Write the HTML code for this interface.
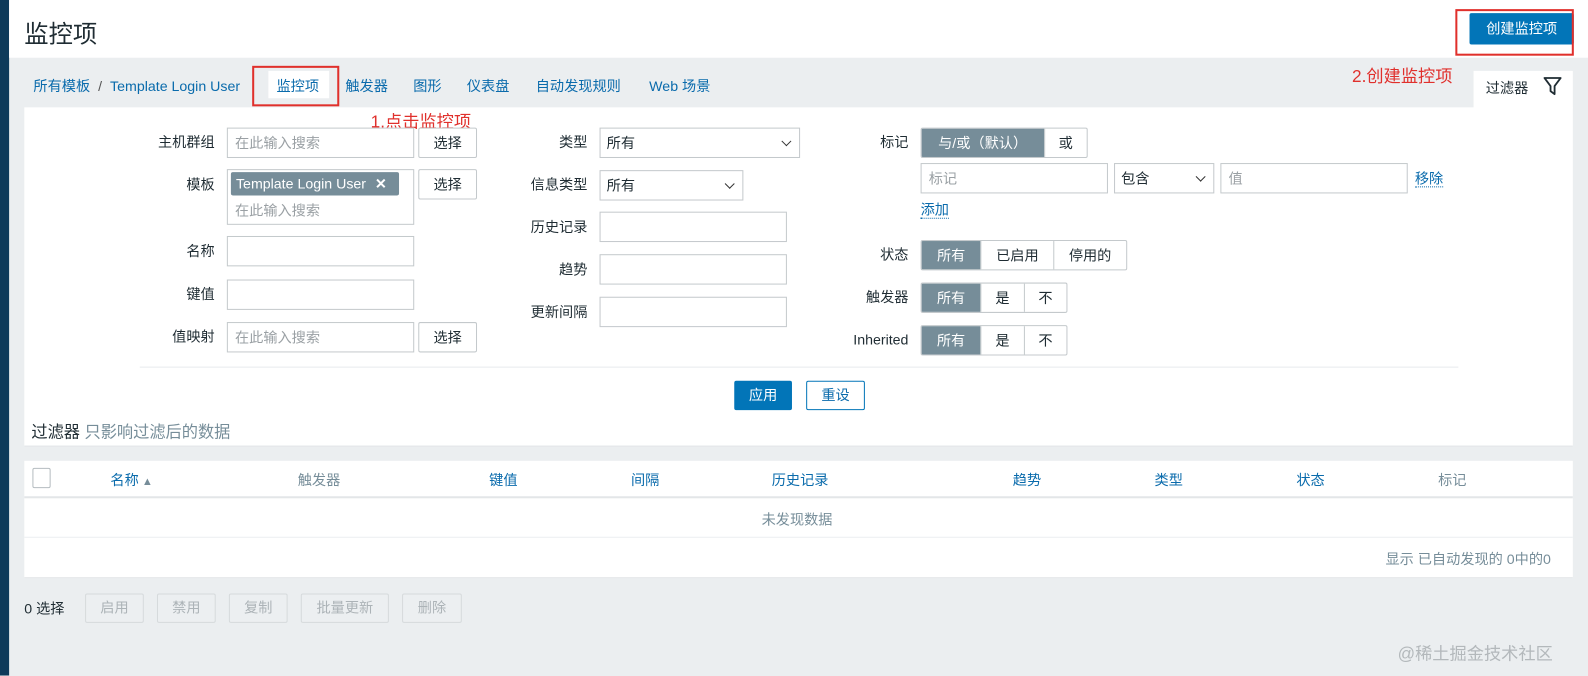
<!DOCTYPE html>
<html><head><meta charset="utf-8"><style>
*{box-sizing:border-box;margin:0;padding:0}
body{width:1588px;height:667px;background:#ebeef0;font-family:"Liberation Sans","Noto Sans CJK SC",sans-serif;font-size:14px;color:#1f2c33;position:relative;overflow:hidden}
#w{position:absolute;left:0;top:0;width:1568px;height:659px;transform:scale(1.01276);transform-origin:0 0}
.a{position:absolute}
.side{left:0;top:0;width:9px;height:667px;background:#0e3a5a}
.hdr{left:9px;top:0;width:1579px;height:57px;background:#fff}
.lbl{position:absolute;text-align:right;font-size:14px;line-height:30px}
.in{position:absolute;border:1px solid #c4c9cc;background:#fff;height:30px;line-height:28px;padding-left:7px;font-size:14px;color:#9aa0a4}
.sel{position:absolute;border:1px solid #c4c9cc;background:#fff;height:30px;line-height:28px;padding-left:6px;color:#1f2c33}
.sel:after{content:"";position:absolute;right:9px;top:9px;width:6px;height:6px;border-right:1px solid #333;border-bottom:1px solid #333;transform:rotate(45deg)}
.btn{position:absolute;border:1px solid #c4c9cc;background:#fff;height:30px;line-height:28px;text-align:center;border-radius:2px}
.seg{position:absolute;display:flex;height:30px;border:1px solid #c4c9cc;border-radius:2px;overflow:hidden}
.seg span{line-height:28px;text-align:center;border-left:1px solid #c4c9cc}
.seg span:first-child{border-left:none;background:#768d99;color:#fff}
.lnk{color:#0a6bac}
.th{position:absolute;top:464px;font-size:14px;color:#0a6bac}
.dis{position:absolute;top:586px;height:29px;border:1px solid #d6dadc;background:#eceff1;color:#acb3b7;line-height:27px;text-align:center;border-radius:2px}
</style></head><body><div id="w">
<div class="a side"></div>
<div class="a hdr"></div>
<div class="a" style="left:24px;top:14px;font-size:24px;color:#1f2c33">监控项</div>
<div class="a" style="left:1451px;top:13px;width:103px;height:31px;background:#0275b8;color:#fff;text-align:center;line-height:31px;border-radius:2px">创建监控项</div>
<div class="a" style="left:1437px;top:9px;width:117px;height:46px;border:2px solid #e0302c"></div>

<div class="a" style="left:33px;top:75px;font-size:14px"><span class="lnk">所有模板</span> <span style="color:#555;margin:0 4px">/</span> <span class="lnk">Template Login User</span></div>
<div class="a" style="left:265px;top:70px;width:60px;height:27px;background:#fff"></div>
<div class="a lnk" style="left:273px;top:75px">监控项</div>
<div class="a" style="left:249px;top:65px;width:86px;height:40px;border:2px solid #e0302c"></div>
<div class="a lnk" style="left:341px;top:75px">触发器</div>
<div class="a lnk" style="left:408px;top:75px">图形</div>
<div class="a lnk" style="left:461px;top:75px">仪表盘</div>
<div class="a lnk" style="left:529px;top:75px">自动发现规则</div>
<div class="a lnk" style="left:641px;top:75px">Web 场景</div>
<div class="a" style="left:1335px;top:61px;color:#e0302c;font-size:17px">2.创建监控项</div>
<div class="a" style="left:1455px;top:70px;width:98px;height:37px;background:#fff"></div>
<div class="a" style="left:1467px;top:77px">过滤器</div>
<svg class="a" style="left:1523px;top:75px" width="20" height="20" viewBox="0 0 20 20"><path d="M2 2H18L12 10V18L8 15V10Z" fill="none" stroke="#1f2c33" stroke-width="1.8" stroke-linejoin="round"/></svg>

<div class="a" style="left:24px;top:106px;width:1529px;height:335px;background:#fff;border-bottom:1px solid #dfe3e5"></div>
<div class="a" style="left:366px;top:106px;color:#e0302c;font-size:17px">1.点击监控项</div>

<div class="lbl" style="left:120px;width:92px;top:125px">主机群组</div>
<div class="in" style="left:224px;top:126px;width:185px">在此输入搜索</div>
<div class="btn" style="left:413px;top:126px;width:58px">选择</div>
<div class="lbl" style="left:120px;width:92px;top:167px">模板</div>
<div class="in" style="left:224px;top:167px;width:185px;height:55px"></div>
<div class="a" style="left:228px;top:170px;width:166px;height:23px;background:#768d99;color:#fff;line-height:23px;padding-left:5px;border-radius:2px">Template Login User <b style="margin-left:5px">✕</b></div>
<div class="a" style="left:232px;top:198px;color:#9aa0a4">在此输入搜索</div>
<div class="btn" style="left:413px;top:167px;width:58px">选择</div>
<div class="lbl" style="left:120px;width:92px;top:233px">名称</div>
<div class="in" style="left:224px;top:233px;width:185px"></div>
<div class="lbl" style="left:120px;width:92px;top:275px">键值</div>
<div class="in" style="left:224px;top:276px;width:185px"></div>
<div class="lbl" style="left:120px;width:92px;top:317px">值映射</div>
<div class="in" style="left:224px;top:318px;width:185px">在此输入搜索</div>
<div class="btn" style="left:413px;top:318px;width:58px">选择</div>

<div class="lbl" style="left:480px;width:100px;top:125px">类型</div>
<div class="sel" style="left:592px;top:126px;width:198px">所有</div>
<div class="lbl" style="left:480px;width:100px;top:167px">信息类型</div>
<div class="sel" style="left:592px;top:168px;width:142px">所有</div>
<div class="lbl" style="left:480px;width:100px;top:209px">历史记录</div>
<div class="in" style="left:592px;top:209px;width:185px"></div>
<div class="lbl" style="left:480px;width:100px;top:251px">趋势</div>
<div class="in" style="left:592px;top:251px;width:185px"></div>
<div class="lbl" style="left:480px;width:100px;top:293px">更新间隔</div>
<div class="in" style="left:592px;top:293px;width:185px"></div>

<div class="lbl" style="left:800px;width:97px;top:125px">标记</div>
<div class="seg" style="left:909px;top:126px;width:165px"><span style="width:122px">与/或（默认）</span><span style="width:43px">或</span></div>
<div class="in" style="left:909px;top:161px;width:185px">标记</div>
<div class="sel" style="left:1100px;top:161px;width:99px">包含</div>
<div class="in" style="left:1205px;top:161px;width:185px">值</div>
<div class="a lnk" style="left:1397px;top:168px;border-bottom:1px dotted #0a6bac;line-height:16px">移除</div>
<div class="a lnk" style="left:909px;top:199px;border-bottom:1px dotted #0a6bac;line-height:16px">添加</div>
<div class="lbl" style="left:800px;width:97px;top:236px">状态</div>
<div class="seg" style="left:909px;top:237px;width:204px"><span style="width:59px">所有</span><span style="width:72px">已启用</span><span style="width:73px">停用的</span></div>
<div class="lbl" style="left:800px;width:97px;top:278px">触发器</div>
<div class="seg" style="left:909px;top:279px;width:145px"><span style="width:59px">所有</span><span style="width:43px">是</span><span style="width:43px">不</span></div>
<div class="lbl" style="left:800px;width:97px;top:320px">Inherited</div>
<div class="seg" style="left:909px;top:321px;width:145px"><span style="width:59px">所有</span><span style="width:43px">是</span><span style="width:43px">不</span></div>

<div class="a" style="left:138px;top:362px;width:1302px;height:1px;background:#e8ebed"></div>
<div class="a" style="left:725px;top:376px;width:57px;height:29px;background:#0275b8;color:#fff;text-align:center;line-height:29px;border-radius:2px">应用</div>
<div class="a" style="left:796px;top:376px;width:58px;height:29px;border:1px solid #0275b8;color:#0a6bac;text-align:center;line-height:27px;border-radius:2px;background:#fff">重设</div>
<div class="a" style="left:31px;top:413px;font-size:16px">过滤器 <span style="color:#768d99">只影响过滤后的数据</span></div>

<div class="a" style="left:24px;top:455px;width:1529px;height:116px;background:#fff;border-bottom:1px solid #dfe3e5"></div>
<div class="a" style="left:24px;top:490px;width:1529px;height:2px;background:#e3e6e8"></div>
<div class="a" style="left:24px;top:530px;width:1529px;height:1px;background:#eceff1"></div>
<div class="a" style="left:32px;top:462px;width:18px;height:20px;border:1px solid #b5bcc0;border-radius:2px"></div>
<div class="th" style="left:109px">名称<span style="color:#768d99;font-size:11px"> ▲</span></div>
<div class="th" style="left:294px;color:#768d99">触发器</div>
<div class="th" style="left:483px">键值</div>
<div class="th" style="left:623px">间隔</div>
<div class="th" style="left:762px">历史记录</div>
<div class="th" style="left:1000px">趋势</div>
<div class="th" style="left:1140px">类型</div>
<div class="th" style="left:1280px">状态</div>
<div class="th" style="left:1420px;color:#768d99">标记</div>
<div class="a" style="left:752px;top:503px;color:#768d99">未发现数据</div>
<div class="a" style="left:1368px;top:542px;color:#768d99">显示 已自动发现的 0中的0</div>

<div class="a" style="left:24px;top:591px">0 选择</div>
<div class="dis" style="left:84px;width:58px">启用</div>
<div class="dis" style="left:155px;width:58px">禁用</div>
<div class="dis" style="left:226px;width:58px">复制</div>
<div class="dis" style="left:297px;width:87px">批量更新</div>
<div class="dis" style="left:397px;width:59px">删除</div>
<div class="a" style="left:1380px;top:631px;font-size:17px;color:#b3b8bb">@稀土掘金技术社区</div>
</div></body></html>
